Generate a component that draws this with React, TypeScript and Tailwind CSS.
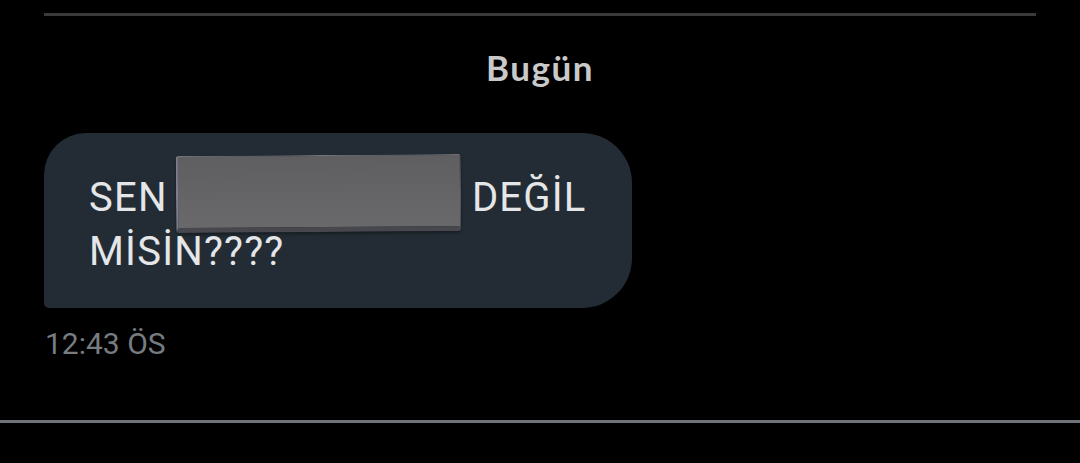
import React from "react";

export default function App() {
  return (
    <div className="w-full h-[463px] bg-black flex flex-col overflow-hidden">
      <div className="mt-[13px] mx-[44px] h-[3px] bg-[#3a3a3d]" />
      <div
        className="mt-[34px] text-center text-[35px] leading-[35px] font-bold tracking-[1.5px] text-[#c9c9c9]"
        style={{ fontFamily: "Lato, 'Noto Sans', sans-serif" }}
      >
        Bugün
      </div>
      <div className="mt-[48px] ml-[44px] w-[588px] h-[175px] bg-[#232c34] rounded-tl-[42px] rounded-tr-[50px] rounded-br-[50px] rounded-bl-[5px] pl-[45px] pr-[20px] pt-[38px]">
        <p
          className="text-[40px] leading-[54px] tracking-[1.2px] text-[#e4e6e8]"
          style={{ fontFamily: "Roboto, 'Noto Sans', sans-serif" }}
        >
          SEN{" "}
          <span className="relative inline-block align-top w-[285px] h-[54px] -ml-[3px]">
            <span className="absolute left-0 right-0 top-[-16px] h-[77px] -rotate-[0.4deg] rounded-[3px] bg-gradient-to-b from-[#5f5f61] to-[#69696b] border-l-[2px] border-l-[#7b7f8c] border-t border-t-[#74747a] border-b-[5px] border-b-[#47474d] border-r border-r-[#58585c] shadow-[0_2px_3px_rgba(0,0,0,0.35)]" />
          </span>{" "}
          DEĞİL MİSİN????
        </p>
      </div>
      <div
        className="mt-[21px] ml-[45px] text-[30px] leading-[30px] text-[#777c81]"
        style={{ fontFamily: "Roboto, 'Noto Sans', sans-serif" }}
      >
        12:43 ÖS
      </div>
      <div className="mt-[61px] h-[3px] w-full bg-[#6e7479]" />
    </div>
  );
}
